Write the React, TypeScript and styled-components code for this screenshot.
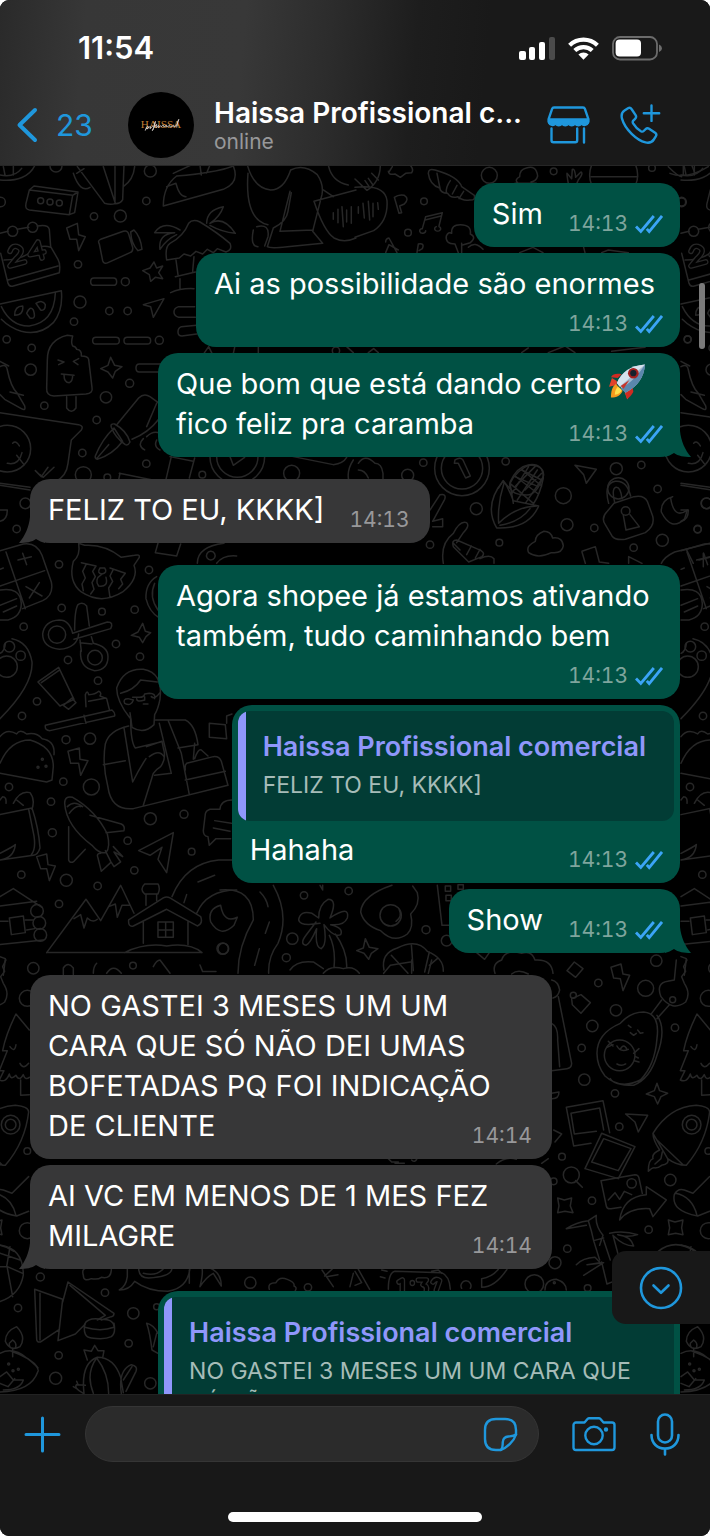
import React from "react";
import styled, { createGlobalStyle } from "styled-components";

const color = {
  accent: "#1f97dc",
  bar: "#181818",
  outgoing: "#005144",
  incoming: "#373738",
  quote: "#023c35",
  quoteName: "#8f97fb",
  doodle: "#272727",
};

const GlobalStyle = createGlobalStyle`
  * { box-sizing: border-box; }
  html, body, #root { height: 100%; }
  body { margin: 0; background: #fff; }
  button { background: none; border: 0; padding: 0; margin: 0; color: inherit; font: inherit; }
  svg { display: block; }
`;

const Screen = styled.div`
  height: 100vh;
  display: flex;
  flex-direction: column;
  overflow: hidden;
  border-radius: 9px;
  background: #000;
  color: #fff;
  font-family: Inter, "Liberation Sans", sans-serif;
`;

/* ---------- header ---------- */

const Header = styled.header`
  flex: none;
  padding-bottom: 8px;
  border-bottom: 1px solid #262626;
  background: linear-gradient(95deg, #2a2a2a 0%, #373737 12%, #383838 34%, #2c2c2c 46%, #1d1d1d 58%, #191919 68%);
`;

const StatusBar = styled.div`
  height: 92px;
  padding: 4px 48px 0 78px;
  display: flex;
  align-items: center;
  justify-content: space-between;
`;

const Clock = styled.time`
  font-size: 31px;
  line-height: 36px;
  font-weight: 600;
`;

const StatusIcons = styled.div`
  display: flex;
  align-items: center;
  gap: 13px;
`;

const NavRow = styled.div`
  height: 65px;
  padding: 0 49px 0 16px;
  display: flex;
  align-items: center;
`;

const BackButton = styled.button`
  width: 112px;
  flex: none;
  display: flex;
  align-items: center;
  gap: 18px;
  color: ${color.accent};
  font-size: 30px;
  line-height: 36px;
`;

const Contact = styled.div`
  flex: 1;
  min-width: 0;
  padding-left: 20px;
`;

const ContactName = styled.h1`
  margin: 0;
  font-size: 28px;
  line-height: 34px;
  font-weight: 600;
  white-space: nowrap;
`;

const ContactStatus = styled.p`
  margin: 0;
  color: #98989a;
  font-size: 21px;
  line-height: 24px;
`;

const NavActions = styled.div`
  flex: none;
  display: flex;
  align-items: center;
  gap: 30px;
  color: ${color.accent};
`;

/* ---------- conversation ---------- */

const Chat = styled.main`
  position: relative;
  flex: 1;
  min-height: 0;
  overflow: hidden;
`;

const Wallpaper = styled.svg`
  position: absolute;
  inset: 0;
  width: 100%;
  height: 100%;
`;

const Thread = styled.ol`
  position: relative;
  list-style: none;
  margin: 0;
  padding: 17px 30px;
  display: flex;
  flex-direction: column;
  gap: 22px;
`;

const Group = styled.li`
  display: flex;
  flex-direction: column;
  gap: 6px;
`;

const BubbleBox = styled.article<{ $mine: boolean; $wide?: boolean }>`
  position: relative;
  align-self: ${(p) => (p.$mine ? "flex-end" : "flex-start")};
  width: ${(p) => (p.$wide ? "80.3%" : "auto")};
  border-radius: 20px;
  background: ${(p) => (p.$mine ? color.outgoing : color.incoming)};
`;

const Body = styled.div<{ $quoted?: boolean; $mine: boolean }>`
  padding: ${(p) => (p.$quoted ? "9px" : "11px")} ${(p) => (p.$mine ? "17px" : "20px")} 13px 18px;
`;

const Message = styled.p`
  margin: 0;
  font-size: 29px;
  line-height: 40px;
  white-space: nowrap;
`;

const LastRow = styled.div`
  display: flex;
  align-items: flex-end;
  justify-content: space-between;
  gap: 25px;
`;

const MetaRow = styled.div`
  display: flex;
  justify-content: flex-end;
  padding-top: 10px;
`;

const FullLines = styled.div`
  padding-right: 8px;
`;

const Meta = styled.span`
  flex: none;
  display: flex;
  align-items: center;
  gap: 7px;
  height: 20px;
`;

const Time = styled.time<{ $mine: boolean }>`
  font-size: 21px;
  line-height: 20px;
  font-variant-numeric: tabular-nums;
  color: ${(p) => (p.$mine ? "#7fa59d" : "#98989a")};
`;

const QuoteArea = styled.div`
  padding: 6px 6px 0;
`;

const Quote = styled.blockquote`
  margin: 0;
  display: flex;
  overflow: hidden;
  border-radius: 12px;
  background: ${color.quote};
`;

const QuoteBar = styled.span`
  width: 8px;
  flex: none;
  background: ${color.quoteName};
`;

const QuoteBody = styled.div`
  padding: 20px 28px 20px 17px;
`;

const QuoteName = styled.cite`
  display: block;
  font-style: normal;
  font-weight: 600;
  font-size: 27px;
  line-height: 32px;
  color: ${color.quoteName};
  white-space: nowrap;
`;

const QuoteText = styled.p`
  margin: 6px 0 0;
  font-size: 23px;
  line-height: 32px;
  color: #a6bcb8;
  white-space: pre;
`;

const Tail = styled.svg<{ $mine: boolean }>`
  position: absolute;
  bottom: 0;
  ${(p) => (p.$mine ? "right: -11px;" : "left: -11px; transform: scaleX(-1);")}
  fill: ${(p) => (p.$mine ? color.outgoing : color.incoming)};
`;

const InlineEmoji = styled.svg`
  display: inline-block;
  vertical-align: -6px;
`;

const ScrollThumb = styled.span`
  position: absolute;
  right: 5px;
  top: 117px;
  width: 6px;
  height: 66px;
  border-radius: 3px;
  background: #7a7a7a;
`;

const JumpButton = styled.button`
  position: absolute;
  right: 0;
  bottom: 70px;
  width: 98px;
  height: 73px;
  display: flex;
  align-items: center;
  justify-content: center;
  border-radius: 14px 0 0 14px;
  background: ${color.bar};
  color: ${color.accent};
`;

/* ---------- composer ---------- */

const Footer = styled.footer`
  flex: none;
  border-top: 1px solid #222;
  background: ${color.bar};
`;

const Composer = styled.form`
  display: flex;
  align-items: center;
  padding: 11px 30px 0 24px;
  color: ${color.accent};
`;

const Field = styled.label`
  flex: 1;
  min-width: 0;
  height: 56px;
  margin: 0 33px 0 24px;
  padding: 0 20px 0 28px;
  display: flex;
  align-items: center;
  border: 1px solid #353535;
  border-radius: 28px;
  background: #2b2b2b;
`;

const TextInput = styled.input`
  flex: 1;
  min-width: 0;
  border: 0;
  outline: 0;
  background: transparent;
  color: #fff;
  font: inherit;
  font-size: 29px;
`;

const ComposerActions = styled.div`
  flex: none;
  display: flex;
  align-items: center;
  gap: 34px;
`;

const HomeArea = styled.div`
  height: 74px;
  padding-bottom: 14px;
  display: flex;
  align-items: flex-end;
  justify-content: center;
`;

const HomeIndicator = styled.span`
  width: 254px;
  height: 10px;
  border-radius: 5px;
  background: #fff;
`;

/* ---------- icons ---------- */

const line = {
  fill: "none",
  stroke: "currentColor",
  strokeLinecap: "round" as const,
  strokeLinejoin: "round" as const,
};

const Signal = () => (
  <svg width="36" height="23" viewBox="0 0 36 23" fill="#fff">
    <rect x="0" y="14" width="7" height="9" rx="2" />
    <rect x="10" y="10" width="6" height="13" rx="2" />
    <rect x="20" y="5" width="6" height="18" rx="2" />
    <rect x="30" y="0" width="6" height="23" rx="2" fill="#4b4b4b" />
  </svg>
);

const Wifi = () => (
  <svg width="31" height="23" viewBox="0 0 31 23">
    <g fill="none" stroke="#fff" strokeWidth="4.2">
      <path d="M1.6 8.2a20 20 0 0 1 27.8 0" />
      <path d="M6.8 13.6a12.6 12.6 0 0 1 17.4 0" />
    </g>
    <path d="M10.4 17.6a7.4 7.4 0 0 1 10.2 0L15.5 22.8z" fill="#fff" />
  </svg>
);

const Battery = () => (
  <svg width="50" height="25" viewBox="0 0 50 25">
    <rect x="1" y="1" width="44" height="22.500" rx="7" fill="none" stroke="#6c6c6c" strokeWidth="1.8" />
    <rect x="3.600" y="3.600" width="25.400" height="17" rx="4" fill="#fff" />
    <path d="M47 8.500c1.800.8 2.900 2.200 2.900 3.800s-1.100 3-2.900 3.800z" fill="#6c6c6c" />
  </svg>
);

const Chevron = () => (
  <svg width="22" height="36" viewBox="0 0 22 36" {...line} strokeWidth="4">
    <path d="M19 3 3.500 18 19 33" />
  </svg>
);

const AvatarImage = styled.svg`
  flex: none;
`;

const Avatar = () => (
  <AvatarImage width="66" height="66" viewBox="0 0 65 65" role="img" aria-label="Haissa">
    <circle cx="32.500" cy="32.500" r="32.500" fill="#000" />
    <text x="32.500" y="35" textAnchor="middle" fill="#c07f33" fontFamily="Liberation Serif, serif" fontSize="11">
      HAISSA
    </text>
    <path
      d="M17 38c1-3 2-5 3-4s-1 3-2 2c2 0 3-2 4-2s-1 3 0 2 2-3 3-2c2-1 1-4 2-5-1 4-2 8-3 9 1-3 3-5 4-6s-1 3 0 3 2-3 2-2-1 3 1 1 1 1 2 0 1-2 2-1-1 2 1 1 2-2 2-1-1 2 1 1 2-2 2-1 0 2 2 1 2-2 2-1-1 1 1 1 3-5 4-7c-1 3-2 6-2 8"
      fill="none"
      stroke="#ded9d2"
      strokeWidth=".9"
    />
  </AvatarImage>
);

const Store = () => (
  <svg width="43" height="38" viewBox="0 0 43 38" {...line} strokeWidth="2.4">
    <path d="M7 1.500h29a2 2 0 0 1 1.900 1.300l3.500 10.400v2.500a4 4 0 0 1-1.600 2.300M7 1.500a2 2 0 0 0-1.900 1.300L1.600 13.200v2.500a4 4 0 0 0 1.600 2.300M2 13.500h39" />
    <path
      d="M2 14v2.500a3.800 3.800 0 0 0 6.500 1.600 4 4 0 0 0 6.500 0 4 4 0 0 0 6.500 0 4 4 0 0 0 6.500 0 4 4 0 0 0 6.500 0 3.800 3.800 0 0 0 6.500-1.600V14z"
      fill="currentColor"
      strokeWidth="1.500"
    />
    <path d="M4.500 22.500v11.800a2 2 0 0 0 2 2h21.700a2 2 0 0 0 2-2V22.500M37 22.500v14" />
  </svg>
);

const PhonePlus = () => (
  <svg width="41" height="41" viewBox="0 0 41 41" {...line} strokeWidth="2.400">
    <path d="M31.500 1.500v15.400M23.800 9.200h15.400" />
    <path d="M4.500 6.500 8 4.200c1.300-.8 2.700-.5 3.500.8l4.100 6.200c.8 1.300.6 2.600-.5 3.600l-1.800 1.800c-.8.900-.8 1.700-.2 2.800 1.900 3.200 4.500 5.900 7.800 7.800 1.100.6 2 .6 2.800-.2l1.900-1.800c1-1 2.300-1.200 3.500-.4l6 4c1.300.9 1.500 2.300.7 3.500l-2 3.200c-1.700 2.700-4.500 3.700-8.300 2.900C17 36.500 5 25.400 2 14.600c-.9-3.500-.3-6.300 2.500-8.100z" />
  </svg>
);

const Ticks = () => (
  <svg width="28" height="19" viewBox="0 0 28 19" fill="none" stroke="#3ba4f6" strokeWidth="2.800">
    <path d="M1 11.500 5.800 16.500 18.800 1M11.800 13.800l2.400 2.800L27 1" />
  </svg>
);

const Rocket = () => (
  <InlineEmoji width="37" height="36" viewBox="0 0 38 36" role="img" aria-label="🚀">
    <path d="M8 17 3 14l-3 9 8-2zM20 26l3 2-4 8-3-7z" fill="#e2402a" />
    <path d="M9 14 2 13C4 10 7 9 13 10zM24 22l1 6c-2 4-4 6-7 7l-1-7z" fill="#cf2b22" />
    <path d="M7 20c-4 3-5 8-5 14 6 0 10-2 12-7z" fill="#f59a1d" />
    <path d="M9 23c-2 2-3 5-3 8 4 0 6-2 7-5z" fill="#ffe04a" />
    <path d="M8 19C13 8 22 1 37 0c-1 13-7 22-20 29z" fill="#9fb9cf" />
    <path d="M8 19C13 8 22 1 37 0L11 23z" fill="#d5e2ec" />
    <path d="M12 25C22 19 30 11 37 0c-1 13-7 22-20 29z" fill="#5b87ad" />
    <circle cx="25" cy="9" r="5.500" fill="#a3201f" />
    <circle cx="25" cy="9" r="3.200" fill="#15202c" />
    <path d="m12 22 9-6-6 9z" fill="#c5352b" />
  </InlineEmoji>
);

const ChevronCircle = () => (
  <svg width="44" height="44" viewBox="0 0 44 44" {...line} strokeWidth="2.600">
    <circle cx="22" cy="22" r="20" />
    <path d="m14.500 19.500 7.500 7.300 7.500-7.300" />
  </svg>
);

const Plus = () => (
  <svg width="37" height="37" viewBox="0 0 37 37" {...line} strokeWidth="3">
    <path d="M18.500 2v33M2 18.500h33" />
  </svg>
);

const Sticker = () => (
  <svg width="35" height="35" viewBox="0 0 35 35" {...line} strokeWidth="2.400">
    <path d="M33 17.500V13C33 5.500 29.500 2 22 2h-9C5.500 2 2 5.500 2 13v9c0 7.500 3.500 11 11 11h4.500C24 31 31 24 33 17.500z" />
    <path d="M18 33c2-2 1.500-4 1.800-8 .3-3.500 2-5.200 5.500-5.500 4-.3 5.700-.2 7.700-2" />
  </svg>
);

const Camera = () => (
  <svg width="44" height="35" viewBox="0 0 44 35" {...line} strokeWidth="2.400">
    <path d="M4 5.500h8.500l3-3.500c.5-.5 1-.7 1.600-.7h9.800c.6 0 1.100.2 1.600.7l3 3.500H40a2.500 2.500 0 0 1 2.500 2.500v22.500A2.500 2.500 0 0 1 40 33H4a2.500 2.500 0 0 1-2.500-2.500V8A2.500 2.500 0 0 1 4 5.500z" />
    <circle cx="22" cy="18.500" r="8.700" />
    <circle cx="34" cy="12.500" r="1" fill="currentColor" />
  </svg>
);

const Mic = () => (
  <svg width="30" height="43" viewBox="0 0 30 43" {...line} strokeWidth="2.600">
    <rect x="8" y="1.500" width="14" height="28" rx="7" />
    <path d="M1.500 22c0 8.500 6 13.500 13.500 13.500S28.500 30.500 28.500 22M15 36v5.500" />
  </svg>
);

/* ---------- wallpaper doodles ---------- */

type Dot = [number, number, number];

const Dots = ({ at }: { at: Dot[] }) => (
  <>
    {at.map(([x, y, r]) => (
      <circle key={`${x}-${y}`} cx={x} cy={y} r={r} />
    ))}
  </>
);

/* A fat stroke hollowed out, so that only its rim shows. */
const Outline = ({ d }: { d: string }) => (
  <>
    <path d={d} strokeWidth="17" />
    <path d={d} stroke="#000" strokeWidth="9" />
  </>
);

const Patch = ({ id, x, y, children }: { id?: string; x: number; y: number; children: React.ReactNode }) => (
  <g id={id}>
    <g transform={`translate(${x} ${y}) scale(.3333)`}>{children}</g>
  </g>
);

const Doodles = () => (
  <Wallpaper
    viewBox="0 166 710 1228"
    preserveAspectRatio="xMinYMin slice"
    aria-hidden="true"
    fill="none"
    stroke={color.doodle}
    strokeWidth="4.500"
    strokeLinecap="round"
    strokeLinejoin="round"
  >
    <Patch id="doodle-top" x={0} y={160}>
      <Dots
        at={[
          [168, 18, 18], [451, 33, 18], [2, 126, 14], [439, 123, 11], [282, 169, 11], [361, 168, 18],
          [122, 122, 9], [150, 126, 9], [178, 129, 9], [234, 313, 11], [376, 365, 12], [328, 453, 11],
          [383, 453, 11], [240, 426, 18], [222, 485, 11], [478, 541, 12], [20, 538, 11], [95, 564, 11],
          [92, 629, 17], [389, 670, 12], [318, 712, 17], [133, 737, 11], [290, 780, 11], [247, 879, 11],
          [439, 911, 11], [250, 944, 24], [322, 952, 10], [607, 944, 10], [875, 940, 24], [22, 866, 70],
          [712, 890, 82], [712, 890, 62], [1008, 572, 11], [38, 214, 15], [98, 202, 15],
        ]}
      />
      <path d="M0 60c50 5 90-10 105-45M0 45c25 5 50 0 65-20M10 20l5 25M40 15l0 30" />
      <path d="m88 90 130 16-10 58-120-14q-14-2-10-20zM88 90l14-12 132 18-10 62-16 6M218 106l16-10" />
      <path d="M0 220l24-6M52 208l34-6M112 198q32-6 36 10l4 52 22 38q8 14 4 40L40 378q-12 4-16-8l-22-90M12 300q50 0 80-24t60-14M24 360l150-42" />
      <Outline d="M30 274q8-22 26-12t-8 34l-18 22 44-12M132 276l-42 8 24-38 12 48" />
      <path d="m200 204 32-14 4 34 20 6-20 42-6-34-20 0zM298 252q-6-10 4-14l68-24q12-4 16 8l12 40q2 12-8 16l-66 30q-12 6-16-6zM392 216l10-6q20 20 24 58l-12 4q-20-20-22-56" />
      <path d="M220 40q20 60 50 42M232 20l82 110q20 6 32 0L310 20M372 15l-4 104q-6 12-22 12M345 20l0 104M370 80q30-20 34-60M230 40l22-14" />
      <path d="M490 138q0-60 40-90 120-10 170-30 20 50-30 70zM520 40l60-28M500 80l28-10q10 40 30 40M600 15l4 30M630 15l-10 24" />
      <path d="M500 300q-6-40 10-50 40-20 56-60 12-14 34-4 50 30 90 64 8 20-12 26l-26-10-12 12-18-10-14 14-20-8-16 14-20-6-14 12zM528 300l6 44M582 290l-4 44M620 190q0-40 50-50-10 30-40 50 40-24 76 30-40-4-76-24M540 210q-50-30-76 8 30 0 60 0-50 4-44 50 20-30 50-44M526 350l60-14M540 356l0 30M512 398q30-14 70-12" />
      <path d="M742 15q20 70 70 75 40 0 60-60 40-20 80 14 20 30 14 60l-28 110 30 36-106 10q-50 6-60 0l18-56q40-20 44-50l10-56M870 94l-30 120 100-4M744 40q-10 140 60 154M760 210q-10 50 14 50M770 200q40-10 34 30l-10 28M985 15q10 50 60 60M970 90l30 20M942 124l126-34M942 124q30 90 60 110 30 16 66 0M1000 158l0 20M1014 148l0 40M1026 140l4 60M1040 150l0 36M1054 140l0 50" />
      <path d="M462 306l8 18 18-6-12 20 12 18-22-4-14 12-4-20-20-12 22-8zM332 592l12 24 22 4-20 14-8 20-14-18-22-10 22-10zM430 434l62-18-32 56-8-32z" />
      <path d="M282 354h58q10 0 10 11t-10 11h-58q-10 0-10-11t10-11zM288 532h60q10 0 10 10t-10 10h-60q-10 0-10-10t10-10zM382 532h60q10 0 10 10t-10 10h-60q-10 0-10-10t10-10zM500 612h-82q-10 0-10 12t10 12h82M584 440h-48q-14 4-14 16t14 16h50M590 496l-46 4q-10 4-10 16t12 12l44-6" />
      <path d="M0 432 184 392q6 60-24 96-40 40-96 26-34-10-60-36M4 440q30 60 84 58 74-10 78-98M44 466q0-28 24-28 4 26-24 28zM80 460q10-24 20-10 10 30-10 24zM108 430q20-12 28 4 0 20-14 16z" />
      <path d="M142 600q0-60 60-74l16 2q-6 20 0 30 10 2 12 10 16 2 14 20 20 0 22 10l10 84q4 18-18 20l-96 6q-24-2-22-24zM174 600l18 6-16 8M236 596l-16 8 14 10M184 642l38 4M192 644q0 24 16 24 10-4 10-22M200 710l0 34q14 20 28 0l0-34" />
      <path d="M0 604l26 14M0 620q20-10 22 10 10 50 30 70l22 38q4 16-10 8L14 718q-10-10-14-14M30 696l40 10M0 758 236 794q16 4 8 16l-30 30-10 70q-4 40-40 56M0 976l90 14M38 850q10-10 20 8M22 910q34 8 44-32M50 886l22 28M106 932l18 18 20-28M120 944l10 8 32-30" />
      <path d="M286 888q20-50 56-84l26 40q-30 40-76 54-8-2-6-10zM290 896l36-42M334 802q-4-12 10-10 36 20 46 54-6 12-14 8-30-20-42-52zM352 792l64-78q16-16 34-4l28 20M396 838q50-20 80-60M470 730l-30 70M430 836q-20 20 4 34M440 830q20-20 40-10M470 840q-10 20 10 30M358 940l100 20M360 940l-4 20M514 890l-16 68M584 894l-16 60M510 890l70 14M690 890l10 26 34-24M880 890l120 24q30-4 40-22M1060 900q-20 30-14 60M612 580l14-20 10 20M700 580l4-18M775 578l0-16M1040 560l20 18" />
    </Patch>
    <use href="#doodle-top" x="681" />

    <Patch x={355} y={160}>
      <Dots
        at={[
          [403, 46, 24], [596, 34, 10], [207, 124, 10], [159, 218, 10], [980, 126, 12], [776, 45, 72],
          [205, 908, 11], [452, 904, 11], [158, 946, 18], [784, 926, 18], [859, 915, 11], [790, 985, 32],
          [321, 925, 82], [321, 925, 62], [998, 538, 10], [891, 24, 10],
        ]}
      />
      <path d="M76 15q0 50-40 76l-36-34M50 40l20 20M40 55l14 20M30 62l14 20M0 82q90-10 96 40 4 60-40 90l-56 20M10 140l0 20M24 130l4 44M40 124l4 56M54 130l0 40M68 128l2 20M102 36l10-16M100 34q0 12 20 8l16 10 16-12 18-2q8-10-6-24" />
      <path d="M220 40q0-16 20-10 70 20 80 50l38 26q4 16-14 14-20 4-36-10-20 6-30-10-20 0-24-16-30-10-34-44zM246 40l10 50M286 62q-14 20-12 36M306 76l-14 26M326 94l-14 22" />
      <path d="M490 70q-14-10 4-20 0-22 20-26 30-10 34 24-4 16-20 18M480 70h64M640 70q-4-20-4-30l14 16 2-28q8-4 10 24l16-16q8 4-8 24l-6 14M708 50h140M940 20q30 30 40 30M945 40q50 20 115-20M985 15v30M1010 15l10 25" />
      <path d="M118 112q14-10 30-6 16 10 0 26l-14 6 6 20-8 2zM212 170l-10 36M262 158l-10 40M212 170l50-12M210 180l48-12M200 206a9 7 0 1 0 12 6M244 200a9 7 0 1 0 8 0M300 252q-30 0-26-24 6-14 16-8-2-26 26-26 34 0 30 28 20 10 0 26l-26 8M300 252l10 26M320 250l0 28M340 262q20-20 44 6M92 246q0-10 10-12l24 44M92 278l10-24 28 16M186 278l4-26q20-4 12 14l-10 6" />
      <path d="m660 916 64 12-30 42-8-26zM520 915q46 0 46 30-20 60-50 60-60 0-50-40 20-44 54-50zM480 950l70 30M500 930l60 30M540 920l-60 60M560 940l-50 50M430 985l14-22 20 22M10 910q20-30 50 0 20 0 24 30l0 20M10 930q20 0 30 24M300 900q16-10 24 0l22 48-14 6-22-44-12 0z" />
      <path d="M494 278l40-16 30 16M690 278l-4-16M740 278l20-8 60 8M40 578l16-12 14 12M500 578l20-14M580 578l50-20 30 20M770 574l100-12" />
    </Patch>

    <Patch id="doodle-left" x={0} y={480}>
      <Dots
        at={[
          [76, 70, 16], [50, 147, 11], [177, 253, 11], [447, 270, 11], [185, 384, 11], [306, 395, 10],
          [404, 389, 11], [71, 440, 11], [348, 492, 11], [204, 540, 11], [420, 530, 11], [171, 464, 26],
          [285, 533, 22], [28, 500, 16], [62, 527, 14], [20, 560, 32], [294, 602, 11], [111, 664, 11],
          [66, 708, 11], [198, 779, 12], [270, 776, 17], [127, 838, 3], [114, 862, 3], [138, 859, 3],
          [190, 905, 11], [274, 921, 24], [27, 921, 11], [153, 965, 11], [157, 1058, 12], [451, 1016, 18],
          [552, 1003, 12], [383, 1082, 11], [575, 1115, 10], [403, 1171, 11], [64, 1184, 11], [199, 1201, 18],
          [293, 1218, 11], [177, 1272, 11], [668, 1406, 17], [100, 1465, 17], [399, 1457, 10], [111, 1293, 19],
          [118, 1329, 19], [121, 1365, 19],
        ]}
      />
      <path d="M0 10l90 12M0 90l22 0q0 30-22 34M0 212l70-20q40-6 56 34l28 80q8 40-26 56l-60 24M18 216l58 170M0 318l134-46M54 240l40-10M68 220l12 34M78 320l48 28M118 308l-30 46M0 330q60-10 64 40 0 40-40 50H0M0 376l50-20M10 396l40-18M0 268l10-4" />
      <path d="M236 190q6 36-16 54-16 60 24 92 60 40 124 0 50-40 34-80l16-24q2-10-14-6l-40 6q-50-40-110-36zM244 248l44 10-10 16 8 16-10 18 6 20-10 14M258 254l-10 20 8 20-10 18 4 20M330 264l46 16-14 18 6 14-12 14M340 268l-10 20 8 16-12 20 4 28M300 264q-10 16 6 18 18-4 8-18zM304 284q-22 14-8 34 30 4 22-26M474 190l-8 28 64 10 12-36M592 250q0-50 80-60M470 290q-34 20-32 66 10 40 38 56M464 310q-18 40 10 80M632 214a13 13 0 1 0 1 0M650 250q20-26 60-22" />
      <path d="M236 462q-4 42-58 46-50-6-50-46 6-40 50-42 30 0 40 40l104-34q20 0 10 20l-110 32M224 450q0-60 10-76 14-10 26 4l8 60M240 480l4 34M274 470l6 20q44 10 44 40 0 40-40 42-46-8-42-60M240 488l36 4" />
      <path d="m428 430 8 24 16 4-14 12-10 18-10-16-24-6 20-10zM0 716q100-100 96-170-10-60-60-70M0 520q14-6 16-30M114 606l62-44 46 96-42 20zM124 608l52-36M190 676l26-22 12 14-22 20zM136 736l200-46q10 8 8 18L150 752q-16 0-14-16zM252 706l6 24M258 680l-2-36q6-16 10 0 20 0 30-10 10 4 4 14l20 8 8 32M266 664l52-10" />
      <path d="M390 714q-40-50-40-90 20-60 80-56 60 10 50 90-6 30-16 46l-2 30q-30 30-66 8l-6-44M362 640q40-10 60-40l50 6M374 670q-6-14 10-14l16 4q-6 20-26 10M398 652l20 0q14 0 16-10l14-2q20 0 16 16M410 656q0 12 24 4l0-10M454 650q10 10 26-12M430 672l14 0" />
      <path d="M386 738q-60 14-70 54-10 60 8 130 10 70 76 64l284-70-20-72q-6-16-24-14l-80 20q-6 4-4 20M392 716q0 70 14 88l76-18M372 744l26 162q20-40 40-70M310 854l66-12M466 720l90 0q30 14 38 74l-60 10M504 720l40 100 24 124M478 730l36 150-50 6M440 800l46-16 4 20q10 30-8 56-16 10-22 20l-30 96M448 830q30-24 44 0M556 900l120-26M584 790l-4 48M584 836q10-30 20-26l20 18M628 730l48 4 4 42-52-4zM680 730l0-22 16-6" />
      <path d="m204 814 34-10 2 34 24 4-22 44-6-36-24 0zM0 770q20-26 50-8 10-16 30 0 30-6 46 14 40 6 36 48M0 850q30-70 90-70 70 20 70 80l-4 40-16 6L0 880M0 960l8-10q12 0 10 20M40 970q20-40 50-32 16 20 6 50M50 960l20 16M0 1004l96-20q20 60 24 120-6 20-20 22L0 1140M86 988l16 80q6 40-8 56M0 1120q40-20 46-26-4 40-46 46" />
      <path d="M194 970q0-24 24-18 70 40 104 110 10 40-4 56-20 4-40-20-80-60-84-128zM202 980q20-20 46 0M208 1000q20-26 34-20M206 1040v100q4 12 16 4l34-36M270 1006l94 26q12 6 8 20l-54 6M302 1120q-14 0-8 14l10 40 28-26M316 1112l16 32 10 16 20-14-20-30 26 14-28-30M416 1112l104-54-20 120-26-40 12-36-36 24zM110 1130l30-8 4 32 22 4-18 44-8-36-18 0zM696 960q-34 0-36 28l-30 0q-12 4-14 14l-6 50q0 16 14 18l4 26 20-20 44 0M644 1022l50 8M640 1044l50 10" />
      <path d="M0 1250l40-24 86 56M0 1278l110-14M0 1324h24M28 1314l42-6 6 50-42 6zM0 1394l130-14M76 1320l24 0M80 1350l24-4M140 1418 258 1258l44 64 60-106 40 84M222 1316l20-12 10 40 10-30q16 16 30 4M326 1280l20-8 6 40 14-36 22 0M140 1418h466M430 1390v-66M564 1324v70M386 1320 490 1254q10-6 20 0l92 56q8 20-10 28L500 1288l-100 50q-16 4-14-18zM438 1276v-34M470 1262v-20M434 1212h40q8 14 0 30h-40q-16-14 0-30zM474 1326h46v46h-46zM497 1326v46M474 1350h46M374 1418q60-30 126-20 70-10 106 20M516 1250q40-100 140-110l50 0M590 1300q30-70 120-70M594 1206l50-20M560 1244l-8 24M662 1276q-40 10-30 50 30 50 70 10l10-24q-40 20-50-36zM190 1484v-20q14-20 30 0v20M280 1480q0-20 10-30M320 1480q20-30 44 0M460 1460q10-20 20-20l30 40M600 1455l8 20 40 0M0 1430l16 6-6 50" />
    </Patch>
    <use href="#doodle-left" x="681" />

    <Patch x={400} y={440}>
      <Dots
        at={[
          [229, 206, 18], [490, 167, 24], [501, 254, 18], [583, 264, 11], [298, 308, 10], [90, 314, 11],
          [701, 323, 11], [787, 301, 18], [773, 147, 11], [893, 268, 11], [677, 213, 13], [920, 190, 16],
        ]}
      />
      <path d="M290 264q-40-70 20-142 10 10 30 60l76 16q-30 70-126 66zM296 250q-4-60 16-120M296 250q50-50 114-52M300 256q60-10 90-50M340 190l-10-60q20-40 60-56 40-4 40 40-10 50-30 78M330 130l70 60M345 108l70 54M365 88l60 50M336 160l50-80M352 180l60-90M376 190l52-76M90 210l30-46q20-4 14 14l-36 66 30-8 0 24-30 0M386 338q-10-20 20-34 0-20 26-30 20 0 26 20 30-4 32 24-4 24-36 20-40 20-68 0zM130 370q-10-60 30-90 20-40 40-32 10 10-10 30l-20 30M160 320q-6-20 10-20l60 26q30 10 16 24l-40 16zM180 330l-20-20M200 344l14-26M226 354l14-26M240 356q30-14 42 0l0 14" />
      <path d="M622 214q-20 20-6 40l20 34q10 14 40 10l60-20q30-20 22-50l-16-44q-10-20-40-14l-60 20zM626 190q-16-60 20-66 34-4 46 44M644 186q-10-40 4-44 14-2 18 34M670 226l8 44 40-10-28-36M818 170q-36 10-34 46 30 60 70 20l8-26q-40 30-50-36zM546 334l40-14 12 46 28 4M556 370l-10-34M686 350l40 20M686 350v20M784 370q10-20 40-34l106-26M860 330l20 40M910 340v40M890 360l40-10" />
    </Patch>

    <Patch x={220} y={860}>
      <Dots
        at={[
          [252, 106, 11], [386, 93, 11], [217, 236, 17], [199, 293, 12], [618, 209, 12], [680, 242, 16], [512, 166, 32], [10, 266, 16],
        ]}
      />
      <path d="M0 90q100-10 100 90-46 80-46 160M160 76q50 90 14 174-30 40-28 90M120 96q20 20 24 44M148 186l-12 34M118 266l-14 50M300 190q-60 10-64-10 4-30 40-20l20 14q0-40 28-56 30 0 6 56 60-40 52 0-10 24-50 20 40 10 30 30-20 10-50-30 10 60-8 72-20-4-14-60-20 46-32 50-20-4 0-30l30-40M328 226q20 40 14 96M346 222q36 50 34 100M210 330q20-30 70-24l30 20M310 340q20-26 60-14 30-10 48 14" />
      <path d="M516 76q-90 30-94 80 10 40 60 56 40 40 80 10 20-20 10-60 30-30 20-64l-14-20M538 150q10 20-10 34M436 236l12 26 26 4-20 14-8 18-14-18-22-8 20-8zM492 330q-10-50 40-66 60-30 90 10 50 20 48 60M514 286l50 54M574 252l6 80M628 276l-14 60M652 296l-24 20M652 76l14 120 28 0M676 78h16v16h-16zM678 106h16v16h-16zM714 74h16v14h-16zM770 278l24 20 14-20M300 76l8 14 0-14" />
    </Patch>

    <Patch id="doodle-right" x={355} y={960}>
      <Dots
        at={[
          [730, 69, 11], [872, 85, 24], [783, 151, 17], [712, 198, 17], [680, 264, 11], [960, 203, 11],
          [1060, 115, 24], [953, 119, 9], [794, 286, 46], [688, 359, 17], [780, 400, 11], [793, 500, 11],
          [1010, 494, 28], [1010, 494, 16], [621, 590, 10], [596, 664, 10], [649, 645, 24], [830, 670, 14],
          [946, 660, 17], [711, 722, 11], [881, 809, 11], [637, 866, 11], [1060, 573, 10], [1060, 812, 24],
          [600, 908, 18], [904, 2, 17], [655, 106, 9], [538, 972, 28], [698, 984, 10], [598, 968, 3],
        ]}
      />
      <path d="m658 6 26 20-22 26-26-20zM650 116l28-12 28 24-28 32-26-26zM768 22l30-10 6 30 20 4-20 46-8-36-20-2zM420 40q-10-30 20-40 10-34 60-20 30-10 40 20 50-4 54 40M470 42q20-16 50 0M590 60q20 4 24 30-4 20-20 24M610 110l40 200q0 14-14 16l-46 6M590 190q20 10 18 50l6 80M590 400l22-4q0 20-20 20M596 510l24 12-20 24M86 40l20-24 60-10M170 0v40M230 0l-10 40" />
      <path d="M726 280q0-60 70-90 30-34 70-34 50 4 40 80-6 80-50 124-60 30-106-12-24-30-24-68zM906 166q30 40 0 120-20 70-70 90-60 0-70-20M890 160l30-40M906 176l36-40M918 110q-16-40 20-46l20-4 6-60M996 0l-10 20 6 14-12 16 8 20q20 30 4 56-40 30-74-16M820 196l8 6M826 218l10 8 8-6M848 210l8 10 8-2M786 258q10 20 34 10M796 268q10-20 20 0M786 312q14 8 26 0M756 262l18-8M760 244l14 14M836 280l16-14M842 290l8 4M838 302l14 4" />
      <path d="M1066 210l-40-48q-30 60-40 110l14 0-24 60 14 0-14 28q20 10 30-18 4 20 20 4 10 20 22-2 6 18 18 8M1008 260q14 20 18-6M1038 310q10 20 26 0M1040 360v46l26-2M906 370l8 22 24 8-20 10-10 22-10-22-24-8 24-10zM634 442l110-20 20 96M634 442l22 116 52-8M648 460l86-16 12 66M648 460l10 62 66-8M740 520l100 40-50 96-100-30zM746 536l82 30-38 66-80-26zM812 462l66 4-28 50-10-30zM894 520q50-80 130-84 40 4 40 20-10 90-70 160-30 0-56-20zM906 540l80 76M894 520q0 20 20 50-24 10-20 26-14 4-14 38 14-14 20-10 10 0 20-8 24-4 18-20M900 612l18-16 4-20" />
      <path d="M738 662 840 644q10 0 12 10l10 46M738 662l16 76q2 10 14 8l30-4M760 720l20-22 14 20 14-24 22 10M794 780q10-70 80-76l0-24 60 40-40 50-10-24q-60-4-90 34zM662 662l20 20M958 704q10-20 30-14l26 10 50-50M958 704q-10 50 70 64l36-14M962 700q50 10 64 66M608 714l20 6 22-6-4 24 8 20-24-4-22 4 4-20zM940 780l20 6 24-6-4 24 4 20-22-4-22 4 4-20zM634 806q30-20 66-24l24-16q-4 30 20 60l-10 30M700 782q10 30 16 60l18 58M716 842l30-8M746 840l20 60M634 806l60-10M764 820q40-10 84 4-30 10-60 0 40 4 48 34-30 0-60-30M774 826l20 74M910 874q50-40 110 0" />
      <path d="M100 596l10 10 20 0M120 610l28 0M170 600q10 10 16-4M424 612q30-24 60-14M560 610l20-14" />
    </Patch>
    <use href="#doodle-right" x="-681" />

    <Patch id="doodle-bottom" x={0} y={1240}>
      <Dots
        at={[
          [121, 111, 12], [315, 158, 11], [54, 204, 11], [400, 220, 17], [386, 310, 11], [176, 346, 11],
          [167, 415, 18], [451, 430, 17], [751, 128, 17], [924, 142, 11], [26, 372, 3], [39, 392, 3], [55, 388, 3], [470, 200, 9],
        ]}
      />
      <path d="M0 15q70 10 70 90-10 60-70 80M0 40l60 20M30 20l-10 60-20 0M22 80l46 20M22 84l16 86M250 106q-6-20 10-22M250 106q0 20 24 10 20 4 30-4 30 6 30-24M358 150q20-10 24-40l0-26M358 150q30 0 46-26 40 30 100 30 60-10 66-70M416 84q0 30 30 30 70-4 70-30M430 100q40 10 60-14M600 140q10-40 6-56M600 140q20-30 40-40l24 38q0-40-34-54M568 130l0-40M808 148q-6-20 20-20 10-20 34-10 24 10 20 20 10 4 4 14M966 90l34 50M1000 84l-26 24M980 110l34-6M1050 140l10-40" />
      <path d="m104 148 84 30M104 148l6 150q0 10 12 8l54-36M120 160l0 140M188 178l-14 124 52-20 30-30M204 126l138 94q0 10-8 10l-30 10M204 126l-16 60M210 136l106 90-24 14M254 252q10-20 50-14 40 0 38 24-40 14-88 0zM254 252q-6 40 20 42 40 6 60-4 14-10 8-40M50 260q30 30 10 60-30 16-44-16 0-30 34-44zM38 300q14 10 8 24-20 4-18-14zM38 324q0 20 0 26M0 340q40-20 80 14 40 30 34 40-20 60-114 62M34 334q60 20 80 50M0 410l20-14 20 24 30 0q-10 30-60 30M0 430l24 10 20-24" />
      <path d="M252 460q-10-90 40-108 50 0 70 60l8 46M280 460q-24-60 10-106M326 460q0-60-36-106M252 330l22 4 10-18 10 16 18 0-4 22M252 330l10 30M364 460q-10-70 30-86 20 4 14 20l-30 60M370 420l26-40M256 436l-26-2q-10 10 20 26M230 424l4 10M220 440l10 6M440 250q10 30 16 80l18 10M440 250q20 4 34 30M460 320l10-40" />
    </Patch>
    <use href="#doodle-bottom" x="681" />

    <Patch x={355} y={1240}>
      <path d="M0 94l20 34-20 8M10 88l34 60M100 148q0-50 20-54l140 4q24 10 26 50M76 110l14 4M80 90l16 4M230 94l20-4 10 10M380 116l0 26q40 0 76-54M380 116q30-4 50-28M570 150q0-30 34-32 30 10 30 32M320 145a15 15 0 1 1 26 0M664 74q20-20 56-22l16 16-40 6 50-6-60 38M740 66l16 66 20-8" />
      <Outline d="M132 126l10-6v32M190 120h24l-10 14q14 4 10 18M234 126q8-12 20-4l-10 28M172 128v2" />
    </Patch>
  </Wallpaper>
);

/* ---------- messages ---------- */

interface BubbleProps {
  lines: React.ReactNode[];
  time: string;
  mine?: boolean;
  wide?: boolean;
  tail?: boolean;
  timeBelow?: boolean;
  quote?: string;
}

const Bubble = ({ lines, time, mine = false, wide, tail, timeBelow, quote }: BubbleProps) => {
  const full = timeBelow ? lines : lines.slice(0, -1);
  const last = lines[lines.length - 1];
  const meta = (
    <Meta>
      <Time $mine={mine}>{time}</Time>
      {mine && <Ticks />}
    </Meta>
  );

  return (
    <BubbleBox $mine={mine} $wide={wide}>
      {tail && (
        <Tail $mine={mine} width="26" height="32" viewBox="0 0 26 32" aria-hidden="true">
          <path d="M0 0h15v6c1 10 5 19 11 26-7 0-13-1-17-4-3 2-6 3-9 4z" />
        </Tail>
      )}
      {quote && (
        <QuoteArea>
          <Quote>
            <QuoteBar />
            <QuoteBody>
              <QuoteName>Haissa Profissional comercial</QuoteName>
              <QuoteText>{quote}</QuoteText>
            </QuoteBody>
          </Quote>
        </QuoteArea>
      )}
      <Body $quoted={!!quote} $mine={mine}>
        <FullLines>
          {full.map((text, i) => (
            <Message key={i}>{text}</Message>
          ))}
        </FullLines>
        {timeBelow ? (
          <MetaRow>{meta}</MetaRow>
        ) : (
          <LastRow>
            <Message>{last}</Message>
            {meta}
          </LastRow>
        )}
      </Body>
    </BubbleBox>
  );
};

export default function App() {
  return (
    <>
      <GlobalStyle />
      <Screen>
        <Header>
          <StatusBar>
            <Clock>11:54</Clock>
            <StatusIcons>
              <Signal />
              <Wifi />
              <Battery />
            </StatusIcons>
          </StatusBar>
          <NavRow>
            <BackButton type="button" aria-label="Voltar, 23 não lidas">
              <Chevron />
              23
            </BackButton>
            <Avatar />
            <Contact>
              <ContactName>Haissa Profissional c...</ContactName>
              <ContactStatus>online</ContactStatus>
            </Contact>
            <NavActions>
              <button type="button" aria-label="Loja">
                <Store />
              </button>
              <button type="button" aria-label="Ligar">
                <PhonePlus />
              </button>
            </NavActions>
          </NavRow>
        </Header>

        <Chat>
          <Doodles />
          <Thread>
            <Group>
              <Bubble mine lines={["Sim"]} time="14:13" />
              <Bubble mine timeBelow lines={["Ai as possibilidade são enormes"]} time="14:13" />
              <Bubble
                mine
                wide
                tail
                lines={[
                  <React.Fragment key="rocket">
                    Que bom que está dando certo <Rocket />
                  </React.Fragment>,
                  "fico feliz pra caramba",
                ]}
                time="14:13"
              />
            </Group>
            <Group>
              <Bubble tail lines={["FELIZ TO EU, KKKK]"]} time="14:13" />
            </Group>
            <Group>
              <Bubble
                mine
                wide
                timeBelow
                lines={["Agora shopee já estamos ativando", "também, tudo caminhando bem"]}
                time="14:13"
              />
              <Bubble mine quote="FELIZ TO EU, KKKK]" lines={["Hahaha"]} time="14:13" />
              <Bubble mine tail lines={["Show"]} time="14:13" />
            </Group>
            <Group>
              <Bubble
                wide
                lines={[
                  "NO GASTEI 3 MESES UM UM",
                  "CARA QUE SÓ NÃO DEI UMAS",
                  "BOFETADAS PQ FOI INDICAÇÃO",
                  "DE CLIENTE",
                ]}
                time="14:14"
              />
              <Bubble wide tail lines={["AI VC EM MENOS DE 1 MES FEZ", "MILAGRE"]} time="14:14" />
            </Group>
            <Group>
              <Bubble
                mine
                wide
                quote={"NO GASTEI 3 MESES UM UM CARA QUE\nSÓ NÃO DEI UMAS BOFETADAS PQ"}
                lines={["Sim"]}
                time="14:14"
              />
            </Group>
          </Thread>
          <ScrollThumb />
          <JumpButton type="button" aria-label="Ir para o fim">
            <ChevronCircle />
          </JumpButton>
        </Chat>

        <Footer>
          <Composer>
            <button type="button" aria-label="Anexar">
              <Plus />
            </button>
            <Field>
              <TextInput type="text" aria-label="Mensagem" />
              <button type="button" aria-label="Figurinhas">
                <Sticker />
              </button>
            </Field>
            <ComposerActions>
              <button type="button" aria-label="Câmera">
                <Camera />
              </button>
              <button type="button" aria-label="Gravar áudio">
                <Mic />
              </button>
            </ComposerActions>
          </Composer>
          <HomeArea>
            <HomeIndicator />
          </HomeArea>
        </Footer>
      </Screen>
    </>
  );
}
